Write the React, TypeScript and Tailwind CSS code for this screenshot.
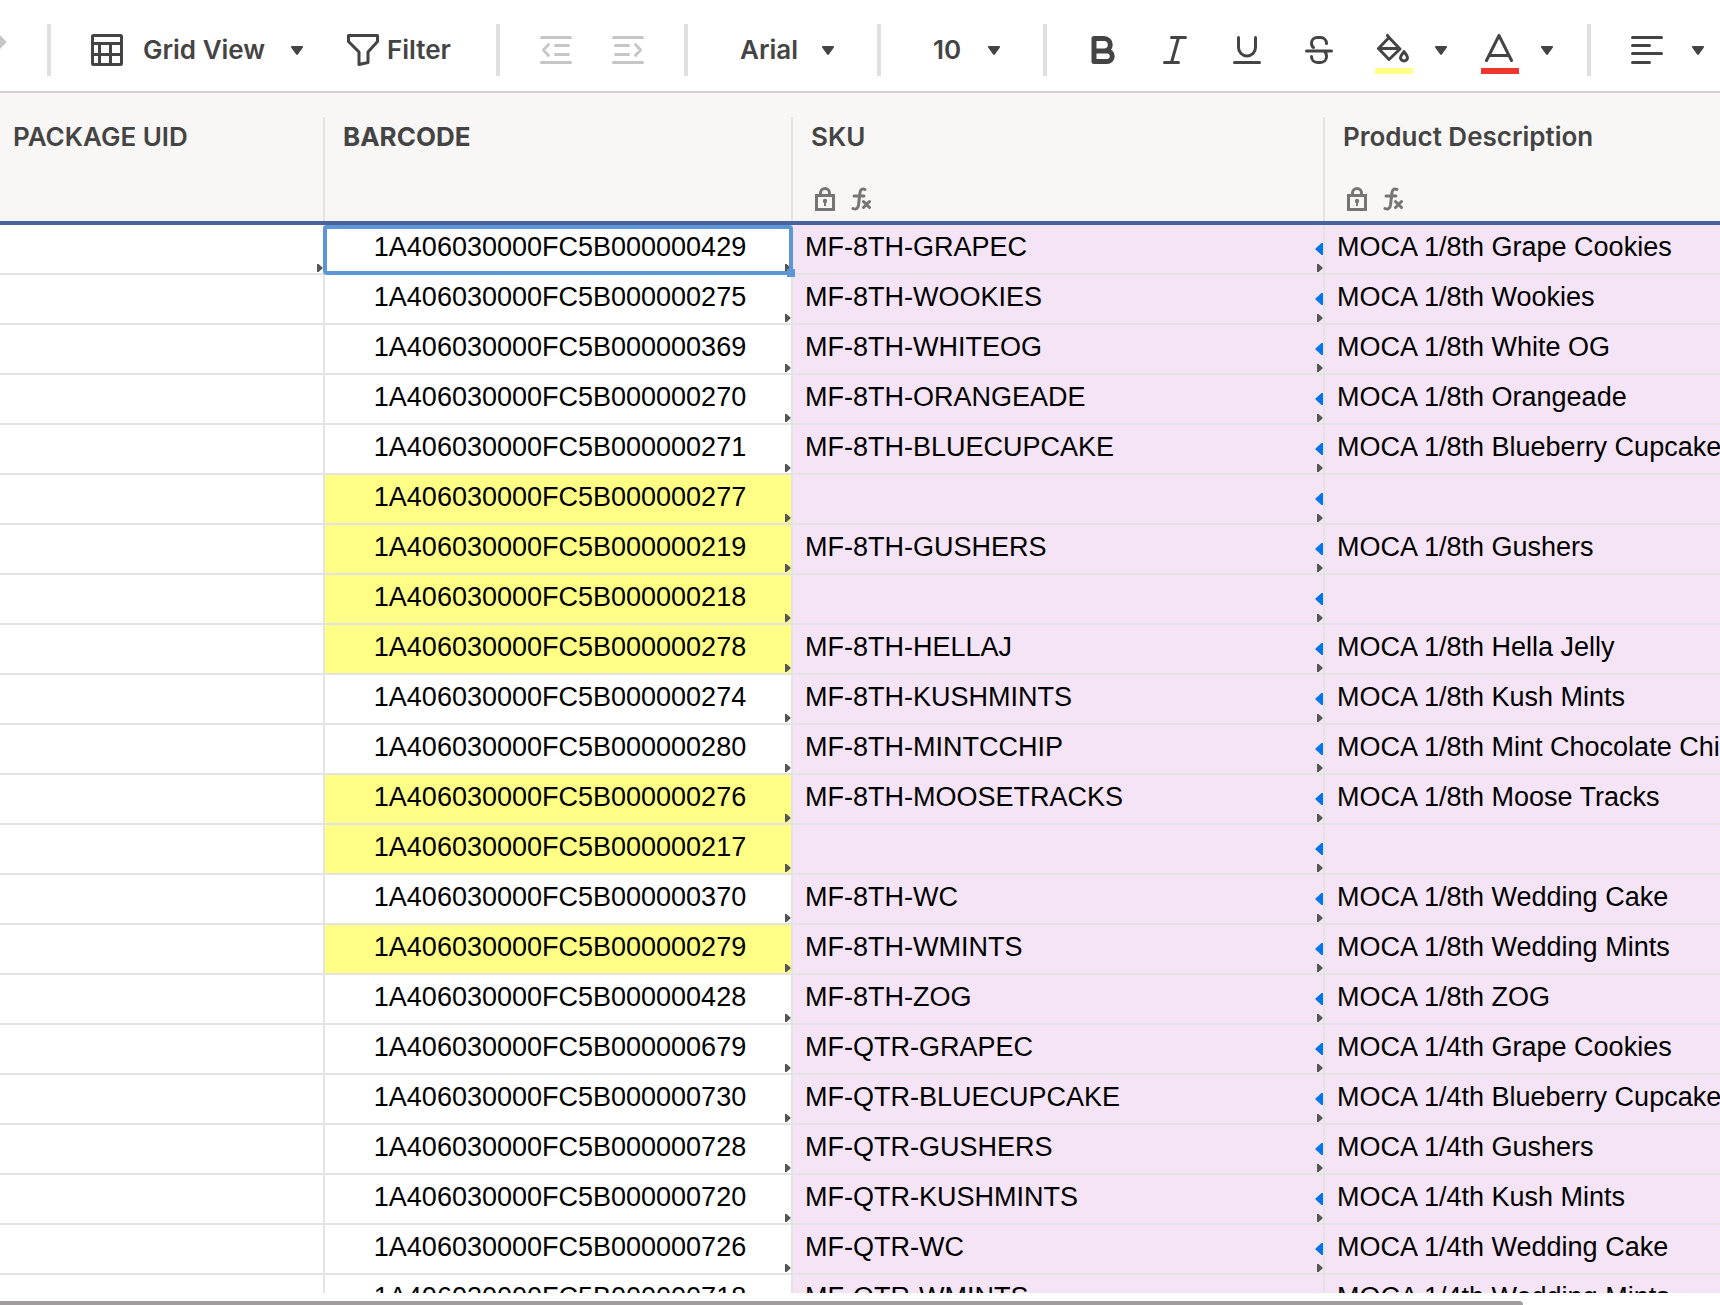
import type { ReactNode } from 'react'

interface Row {
  barcode: string
  sku?: string
  description?: string
  flagged?: boolean
}

const rows: Row[] = [
  { barcode: '1A406030000FC5B000000429', sku: 'MF-8TH-GRAPEC', description: 'MOCA 1/8th Grape Cookies' },
  { barcode: '1A406030000FC5B000000275', sku: 'MF-8TH-WOOKIES', description: 'MOCA 1/8th Wookies' },
  { barcode: '1A406030000FC5B000000369', sku: 'MF-8TH-WHITEOG', description: 'MOCA 1/8th White OG' },
  { barcode: '1A406030000FC5B000000270', sku: 'MF-8TH-ORANGEADE', description: 'MOCA 1/8th Orangeade' },
  { barcode: '1A406030000FC5B000000271', sku: 'MF-8TH-BLUECUPCAKE', description: 'MOCA 1/8th Blueberry Cupcake' },
  { barcode: '1A406030000FC5B000000277', flagged: true },
  { barcode: '1A406030000FC5B000000219', sku: 'MF-8TH-GUSHERS', description: 'MOCA 1/8th Gushers', flagged: true },
  { barcode: '1A406030000FC5B000000218', flagged: true },
  { barcode: '1A406030000FC5B000000278', sku: 'MF-8TH-HELLAJ', description: 'MOCA 1/8th Hella Jelly', flagged: true },
  { barcode: '1A406030000FC5B000000274', sku: 'MF-8TH-KUSHMINTS', description: 'MOCA 1/8th Kush Mints' },
  { barcode: '1A406030000FC5B000000280', sku: 'MF-8TH-MINTCCHIP', description: 'MOCA 1/8th Mint Chocolate Chip' },
  { barcode: '1A406030000FC5B000000276', sku: 'MF-8TH-MOOSETRACKS', description: 'MOCA 1/8th Moose Tracks', flagged: true },
  { barcode: '1A406030000FC5B000000217', flagged: true },
  { barcode: '1A406030000FC5B000000370', sku: 'MF-8TH-WC', description: 'MOCA 1/8th Wedding Cake' },
  { barcode: '1A406030000FC5B000000279', sku: 'MF-8TH-WMINTS', description: 'MOCA 1/8th Wedding Mints', flagged: true },
  { barcode: '1A406030000FC5B000000428', sku: 'MF-8TH-ZOG', description: 'MOCA 1/8th ZOG' },
  { barcode: '1A406030000FC5B000000679', sku: 'MF-QTR-GRAPEC', description: 'MOCA 1/4th Grape Cookies' },
  { barcode: '1A406030000FC5B000000730', sku: 'MF-QTR-BLUECUPCAKE', description: 'MOCA 1/4th Blueberry Cupcake' },
  { barcode: '1A406030000FC5B000000728', sku: 'MF-QTR-GUSHERS', description: 'MOCA 1/4th Gushers' },
  { barcode: '1A406030000FC5B000000720', sku: 'MF-QTR-KUSHMINTS', description: 'MOCA 1/4th Kush Mints' },
  { barcode: '1A406030000FC5B000000726', sku: 'MF-QTR-WC', description: 'MOCA 1/4th Wedding Cake' },
  { barcode: '1A406030000FC5B000000718', sku: 'MF-QTR-WMINTS', description: 'MOCA 1/4th Wedding Mints' },
]

function Icon({ children }: { children: ReactNode }) {
  return (
    <svg
      viewBox="0 0 32 32"
      className="size-8 shrink-0"
      fill="none"
      stroke="currentColor"
      strokeWidth="3"
      strokeLinecap="round"
      strokeLinejoin="round"
      aria-hidden="true"
    >
      {children}
    </svg>
  )
}

function Caret() {
  return (
    <svg viewBox="0 0 12 9" className="h-[9px] w-3 shrink-0" fill="currentColor" aria-hidden="true">
      <path d="M1 0h10c.9 0 1.3 1 .7 1.7L7 8.3c-.5.9-1.5.9-2 0L.3 1.7C-.3 1 .1 0 1 0z" />
    </svg>
  )
}

function Separator() {
  return <div className="h-[52px] w-1 shrink-0 bg-[#e0e0e0]" />
}

function ToolButton({ label, children }: { label: string; children: ReactNode }) {
  return (
    <button type="button" aria-label={label} className="shrink-0">
      <Icon>{children}</Icon>
    </button>
  )
}

function Toolbar() {
  return (
    <div className="flex h-[93px] shrink-0 items-center overflow-hidden border-b-2 border-[#d0d0d0] bg-white pt-[9px] font-['Inter',sans-serif] text-[26px] leading-8 font-semibold text-[#444]">
      <button type="button" aria-label="Redo" className="mr-10 w-[7px] shrink-0 pb-4 text-[#c6c6c6]">
        <svg viewBox="0 0 7 14" className="h-[14px] w-[7px]" fill="currentColor" aria-hidden="true">
          <path d="M0 0l6 6.2a1 1 0 0 1 0 1.6L0 14z" />
        </svg>
      </button>
      <Separator />

      <div className="flex shrink-0 items-center gap-11 px-10">
        <button type="button" className="flex w-[212px] items-center">
          <Icon>
            <rect x="1.5" y="1.5" width="29" height="29" rx="1" />
            <path d="M2 9.5h28M2 20.5h28M8.5 10v20M19.5 10v20" />
          </Icon>
          <span className="ml-5 whitespace-nowrap">Grid View</span>
          <span className="ml-auto">
            <Caret />
          </span>
        </button>
        <button type="button" className="flex w-[109px] items-center gap-2">
          <Icon>
            <path d="M1.5 1.5h29v6L21 18v10.500l-9 2V18L1.5 7.500z" />
          </Icon>
          Filter
        </button>
      </div>
      <Separator />

      <div className="flex shrink-0 items-center gap-10 px-10 text-[#c6c6c6]">
        <ToolButton label="Outdent">
          <path d="M1.5 3.5h29M1.5 28.5h29M15.5 11.5h13M15.5 20.5h13M8.5 10.5L3.5 16l5 5.5" />
        </ToolButton>
        <ToolButton label="Indent">
          <path d="M1.5 3.5h29M1.5 28.5h29M3.5 11.5h13M3.5 20.5h13M23.5 10.5l5 5.5-5 5.5" />
        </ToolButton>
      </div>
      <Separator />

      <div className="shrink-0 px-10">
        <div className="relative flex w-[109px] items-center">
          <select aria-label="Font" className="w-full appearance-none bg-transparent pl-3">
            <option>Arial</option>
            <option>Roboto</option>
            <option>Tahoma</option>
          </select>
          <span className="pointer-events-none absolute right-[3px]">
            <Caret />
          </span>
        </div>
      </div>
      <Separator />

      <div className="shrink-0 px-10">
        <div className="relative flex w-[82px] items-center">
          <select aria-label="Font size" className="w-full appearance-none bg-transparent pl-3">
            <option>10</option>
            <option>12</option>
            <option>14</option>
          </select>
          <span className="pointer-events-none absolute right-[3px]">
            <Caret />
          </span>
        </div>
      </div>
      <Separator />

      <div className="flex shrink-0 items-center gap-10 px-10">
        <ToolButton label="Bold">
          <path d="M7 4.5h10a6.25 6.25 0 0 1 0 12.5H7zM7 17h13a5.25 5.25 0 0 1 0 10.500H7z" strokeWidth="5" />
        </ToolButton>
        <ToolButton label="Italic">
          <path d="M12.5 3.5h14M5.5 28.5h14M19.5 3.5l-7 25" />
        </ToolButton>
        <ToolButton label="Underline">
          <path d="M7.5 3.5v10a8.5 8.5 0 0 0 17 0v-10M3.5 28.5h25" />
        </ToolButton>
        <ToolButton label="Strikethrough">
          <path d="M23.5 9.5c0-3.5-2.5-6-6-6h-3c-3.5 0-6 2.5-6 5.5 0 2.5.5 3.5 2 4.5M8.5 22.5c0 3.5 2.5 6 6 6h3c3.500 0 6-2.500 6-6 0-2.500-.5-4-2-5M3.5 17h25" />
        </ToolButton>
      </div>

      <div className="flex shrink-0 items-center gap-[34px] pr-[34px]">
        <button type="button" aria-label="Fill color" className="relative flex w-[72px] items-center justify-between pl-0.5">
          <Icon>
            <path d="M10.5 1.5L12 3.5M12 3.5l11 11.500-11 10.500-10.500-11zM2.5 14.500h19.500" />
            <path d="M27 17.5c2 3 3.5 4.500 3.500 6a3.500 3.500 0 0 1-7 0c0-1.500 1.500-3 3.500-6z" />
          </Icon>
          <span className="absolute -bottom-2 left-0 h-1.5 w-[38px] bg-[#ffff85]" />
          <Caret />
        </button>
        <button type="button" aria-label="Text color" className="relative flex w-[72px] items-center justify-between pl-0.5">
          <Icon>
            <path d="M3.5 26.5l12.500-25 12.500 25M6.5 21.5h19" />
          </Icon>
          <span className="absolute -bottom-2 left-0 h-1.5 w-[38px] bg-[#ee352e]" />
          <Caret />
        </button>
      </div>
      <Separator />

      <button type="button" aria-label="Align" className="ml-10 flex w-[73px] shrink-0 items-center justify-between">
        <Icon>
          <path d="M1.5 3.5h29M1.5 11.5h17M1.5 19.5h29M1.5 28.5h17" />
        </Icon>
        <Caret />
      </button>
    </div>
  )
}

function ColumnIcons() {
  return (
    <div className="mt-[34px] flex gap-4 pl-1 text-[#757575]">
      <svg viewBox="0 0 20 24" className="h-6 w-5" fill="none" stroke="currentColor" strokeWidth="3" role="img" aria-label="Locked">
        <path d="M1.5 8.5h17v14h-17zM5.5 8V6a4.5 4.5 0 0 1 9 0v2" />
        <circle cx="10" cy="14" r="2.2" fill="currentColor" stroke="none" />
        <path d="M10 14v5" strokeWidth="2" />
      </svg>
      <svg
        viewBox="0 0 20 24"
        className="h-6 w-5"
        fill="none"
        stroke="currentColor"
        strokeWidth="3"
        strokeLinecap="round"
        role="img"
        aria-label="Formula"
      >
        <path d="M14 2.5c-2.5-1.5-4.500 0-5 3L7.5 18c-.5 3.500-2.500 5-5.500 3.500M3 9h10" />
        <path d="M12.5 14.5l6 6M18.5 14.5l-6 6" />
      </svg>
    </div>
  )
}

function HeaderCell({ title, first, bold, last, locked }: { title: string; first?: boolean; bold?: boolean; last?: boolean; locked?: boolean }) {
  return (
    <th scope="col" className="h-32 p-0 pt-6 text-left align-top font-semibold">
      <div
        className={`h-[104px] border-[#e3e3e3] pt-1 ${last ? '' : 'border-r-2'} ${first ? 'pl-[13px]' : 'pl-[18px]'} ${bold ? 'font-bold' : ''}`}
      >
        <div className="whitespace-nowrap">{title}</div>
        {locked && <ColumnIcons />}
      </div>
    </th>
  )
}

// small dark arrow: the cell feeds another sheet
function OutMarker() {
  return (
    <svg viewBox="0 0 6 8" className="absolute right-0 bottom-px h-2 w-1.5" fill="#555" aria-hidden="true">
      <path d="M0 0h1.5L5.5 3.5v1L1.5 8H0z" />
    </svg>
  )
}

// blue arrow: the cell is linked in
function InMarker() {
  return (
    <svg viewBox="0 0 8 12" className="absolute top-[18px] right-0 h-3 w-2" fill="#0073ea" aria-hidden="true">
      <path d="M8 0H6.500L.5 5.500v1L6.500 12H8z" />
    </svg>
  )
}

function Sheet() {
  return (
    <div className="min-h-0 flex-1 overflow-hidden">
      <table className="w-full table-fixed border-separate border-spacing-0">
        <colgroup>
          <col className="w-[325px]" />
          <col className="w-[468px]" />
          <col className="w-[532px]" />
          <col />
        </colgroup>
        <thead className="bg-[#f8f7f5] font-['Inter',sans-serif] text-[26px] leading-8 text-[#444]">
          <tr>
            <HeaderCell title="PACKAGE UID" first />
            <HeaderCell title="BARCODE" bold />
            <HeaderCell title="SKU" locked />
            <HeaderCell title="Product Description" locked last />
          </tr>
          <tr>
            <td colSpan={4} className="h-1 bg-[#4a62a0] p-0" />
          </tr>
        </thead>
        <tbody className="font-['Liberation_Sans',Arial,sans-serif] text-[27px] leading-[45px] whitespace-nowrap text-black">
          {rows.map((row, index) => (
            <tr key={row.barcode}>
              <td className="border-r-2 border-b-2 border-[#e3e3e3] p-0">
                <div className="relative h-12">{index === 0 && <OutMarker />}</div>
              </td>
              <td className={`border-r-2 border-b-2 border-[#e3e3e3] p-0 ${row.flagged ? 'bg-[#ffff85]' : ''}`}>
                <div className="relative h-12 pl-1 text-center">
                  {row.barcode}
                  <OutMarker />
                  {index === 0 && (
                    <div className="absolute -inset-x-0.5 top-0 -bottom-0.5 rounded-sm border-4 border-[#5b96d6]">
                      <span className="absolute -right-1.5 -bottom-1.5 size-2 bg-[#5b96d6]" />
                    </div>
                  )}
                </div>
              </td>
              <td className="border-r-2 border-b-2 border-[#e3e3e3] bg-[#f4e4f5] p-0">
                <div className="relative h-12 pl-3">
                  {row.sku}
                  <InMarker />
                  <OutMarker />
                </div>
              </td>
              <td className="border-b-2 border-[#e3e3e3] bg-[#f4e4f5] p-0">
                <div className="h-12 overflow-hidden pl-3">{row.description}</div>
              </td>
            </tr>
          ))}
        </tbody>
      </table>
    </div>
  )
}

export default function App() {
  return (
    <div className="flex h-screen flex-col overflow-hidden bg-white">
      <Toolbar />
      <Sheet />
      <div className="h-3 shrink-0 pt-2">
        <div className="mr-[197px] h-1 rounded-tr bg-[#9f9d9d]" />
      </div>
    </div>
  )
}
